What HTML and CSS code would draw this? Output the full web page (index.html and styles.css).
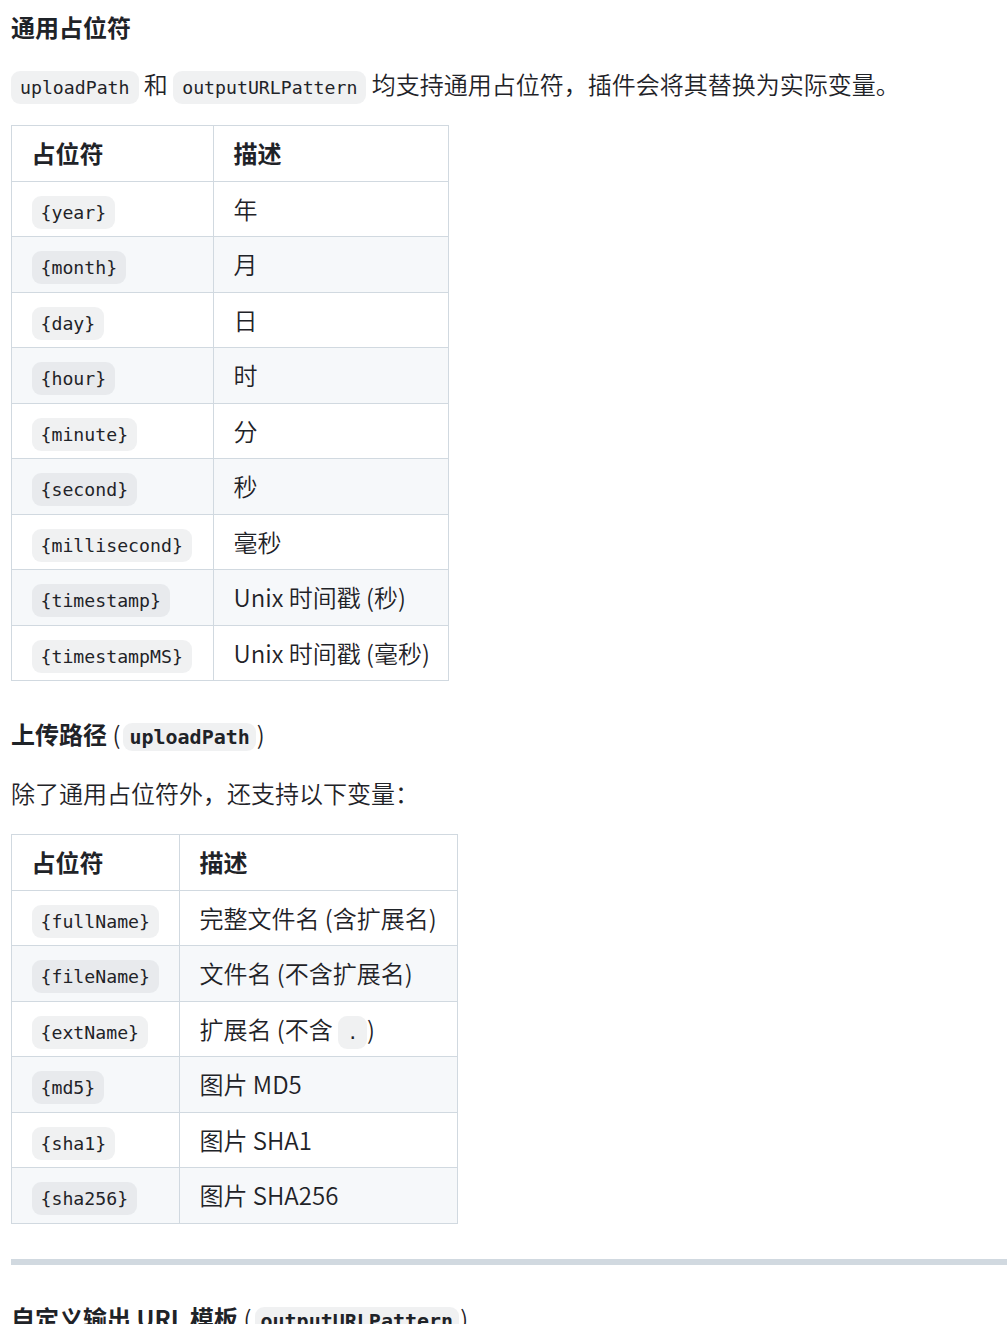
FILE: index.html
```html
<!DOCTYPE html>
<html lang="zh-CN">
<head>
<meta charset="utf-8">
<title>通用占位符</title>
<link rel="stylesheet" href="styles.css">
</head>
<body>
<article class="markdown">
  <h4 class="heading">通用占位符</h4>
  <p class="para"><code class="code">uploadPath</code> 和 <code class="code">outputURLPattern</code> 均支持通用占位符，插件会将其替换为实际变量。</p>
  <table class="tbl tbl-common">
    <thead>
      <tr><th class="col-key">占位符</th><th>描述</th></tr>
    </thead>
    <tbody>
      <tr><td><code class="code">{year}</code></td><td>年</td></tr>
      <tr><td><code class="code">{month}</code></td><td>月</td></tr>
      <tr><td><code class="code">{day}</code></td><td>日</td></tr>
      <tr><td><code class="code">{hour}</code></td><td>时</td></tr>
      <tr><td><code class="code">{minute}</code></td><td>分</td></tr>
      <tr><td><code class="code">{second}</code></td><td>秒</td></tr>
      <tr><td><code class="code">{millisecond}</code></td><td>毫秒</td></tr>
      <tr><td><code class="code">{timestamp}</code></td><td>Unix 时间戳 (秒)</td></tr>
      <tr><td><code class="code">{timestampMS}</code></td><td>Unix 时间戳 (毫秒)</td></tr>
    </tbody>
  </table>

  <h4 class="heading heading-code">上传路径 <span class="paren">(</span><code class="hcode">uploadPath</code><span class="paren">)</span></h4>
  <p class="para">除了通用占位符外，还支持以下变量：</p>
  <table class="tbl tbl-upload">
    <thead>
      <tr><th class="col-key">占位符</th><th>描述</th></tr>
    </thead>
    <tbody>
      <tr><td><code class="code">{fullName}</code></td><td>完整文件名 (含扩展名)</td></tr>
      <tr><td><code class="code">{fileName}</code></td><td>文件名 (不含扩展名)</td></tr>
      <tr><td><code class="code">{extName}</code></td><td>扩展名 (不含 <code class="code">.</code>)</td></tr>
      <tr><td><code class="code">{md5}</code></td><td>图片 MD5</td></tr>
      <tr><td><code class="code">{sha1}</code></td><td>图片 SHA1</td></tr>
      <tr><td><code class="code">{sha256}</code></td><td>图片 SHA256</td></tr>
    </tbody>
  </table>

  <hr class="rule">

  <h4 class="heading heading-code">自定义输出 URL 模板 <span class="paren">(</span><code class="hcode">outputURLPattern</code><span class="paren">)</span></h4>
</article>
</body>
</html>
```

FILE: styles.css
```css
html, body {
  margin: 0;
  padding: 0;
  background: #ffffff;
}

body {
  overflow: hidden;
}

.markdown {
  padding: 12px 0 0 11px;
  color: #1f2328;
  font-family: "Noto Sans CJK SC", "Noto Sans", sans-serif;
  font-size: 24px;
  font-weight: 350;
  line-height: 36px;
}

.heading {
  margin: 0 0 24px;
  font-size: 24px;
  font-weight: 700;
  line-height: 30px;
}

.heading-code {
  margin-top: 38px;
  margin-bottom: 26px;
}

.paren {
  font-weight: 350;
}

.para {
  margin: 0 0 23px;
}

.code {
  font-family: "DejaVu Sans Mono", monospace;
  font-size: 18.2px;
  font-weight: 400;
  line-height: 1;
  padding: 6px 9px;
  margin: 0;
  border-radius: 9px;
  background: rgba(129, 139, 152, 0.12);
  white-space: nowrap;
}

.hcode {
  font-family: "DejaVu Sans Mono", monospace;
  font-size: 20px;
  font-weight: 700;
  line-height: 1;
  padding: 2px 6px;
  margin: 0 1px 0 3px;
  border-radius: 9px;
  background: rgba(129, 139, 152, 0.12);
}

.tbl {
  border-collapse: collapse;
  border-spacing: 0;
  table-layout: fixed;
  margin: 0 0 24px;
}

.tbl-common {
  width: 438px;
}

.tbl-common .col-key {
  width: 162px;
}

.tbl-upload {
  width: 447px;
}

.tbl-upload .col-key {
  width: 128px;
}

.tbl th,
.tbl td {
  border: 1px solid #d1d9e0;
  padding: 9.25px 19.5px;
  text-align: left;
  vertical-align: middle;
  white-space: nowrap;
}

.tbl th {
  font-weight: 700;
}

.tbl tbody tr:nth-child(2n) {
  background: #f6f8fa;
}

.rule {
  height: 6px;
  margin: 35px 0 36px;
  padding: 0;
  border: 0;
  background: #d1d9e0;
}
```
